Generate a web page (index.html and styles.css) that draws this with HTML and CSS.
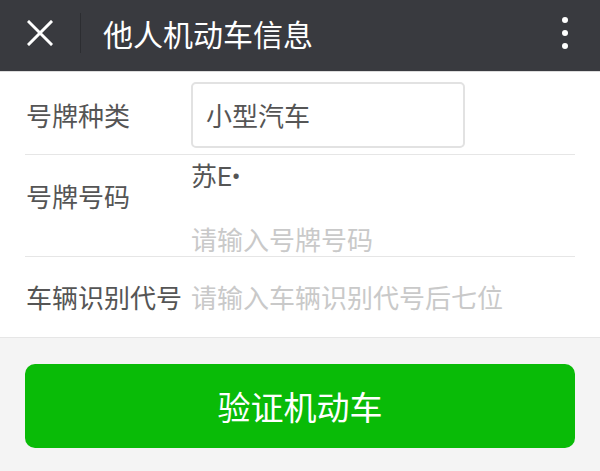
FILE: index.html
```html
<!DOCTYPE html>
<html lang="zh-CN">
<head>
<meta charset="utf-8">
<title>他人机动车信息</title>
<link rel="stylesheet" href="styles.css">
</head>
<body>
<header class="topbar">
  <button class="icon-btn close" aria-label="关闭">
    <svg width="26" height="26" viewBox="0 0 26 26"><path d="M2 2 L24 24 M24 2 L2 24" stroke="#fff" stroke-width="3" stroke-linecap="square" fill="none"/></svg>
  </button>
  <span class="divider"></span>
  <h1 class="title">他人机动车信息</h1>
  <button class="icon-btn more" aria-label="更多">
    <span class="dot"></span><span class="dot"></span><span class="dot"></span>
  </button>
</header>
<main class="page">
  <section class="form">
    <div class="row row-type">
      <div class="label">号牌种类</div>
      <div class="select">小型汽车</div>
    </div>
    <div class="row row-plate">
      <div class="label label-top">号牌号码</div>
      <div class="field-col">
        <div class="value">苏<span class="latin">E•</span></div>
        <div class="placeholder plate-input">请输入号牌号码</div>
      </div>
    </div>
    <div class="row row-vin">
      <div class="label">车辆识别代号</div>
      <div class="placeholder">请输入车辆识别代号后七位</div>
    </div>
  </section>
  <div class="actions">
    <button class="primary">验证机动车</button>
  </div>
</main>
</body>
</html>
```
FILE: styles.css
```css
* { box-sizing: border-box; }
html, body { margin: 0; padding: 0; }
body {
  width: 600px;
  height: 471px;
  overflow: hidden;
  background: #f4f4f4;
  font-family: "Noto Sans CJK SC", "Noto Sans", Roboto, sans-serif;
}
.topbar {
  height: 72px;
  background: #393a3f;
  border-bottom: 1px solid #dcdcdc;
  display: flex;
  align-items: center;
  padding-left: 27px;
  padding-right: 32px;
}
.icon-btn {
  background: none;
  border: 0;
  padding: 0;
  margin: 0;
  display: flex;
  cursor: pointer;
}
.close { width: 26px; height: 26px; margin-top: -6px; }
.divider {
  width: 1px;
  height: 40px;
  background: #2c2d31;
  margin-left: 27px;
  margin-top: -6px;
}
.title {
  margin: -6px 0 0 22px;
  flex: 1;
  font-size: 30px;
  font-weight: normal;
  color: #fff;
  line-height: 36px;
}
.more {
  flex-direction: column;
  gap: 7px;
  margin-top: -6px;
}
.dot {
  width: 6px;
  height: 6px;
  border-radius: 50%;
  background: #fff;
}
.form {
  background: #fff;
  border-bottom: 1px solid #e6e6e6;
}
.row {
  margin: 0 25px;
  display: flex;
  align-items: center;
  border-bottom: 1px solid #e6e6e6;
  font-size: 26px;
  line-height: 30px;
}
.row:last-child { border-bottom: 0; }
.label {
  width: 166px;
  flex: none;
  padding-left: 1px;
  color: #555;
  white-space: nowrap;
}
.row-type { height: 83px; padding-top: 4px; }
.select {
  width: 274px;
  height: 66px;
  border: 2px solid #e2e2e2;
  border-radius: 5px;
  color: #555;
  padding-left: 13px;
  display: flex;
  align-items: center;
}
.row-plate {
  height: 102px;
  align-items: flex-start;
  padding-top: 5px;
}
.label-top { margin-top: 21px; }
.field-col { display: flex; flex-direction: column; }
.value { color: #555; }
.latin { font-family: Roboto, "Noto Sans", sans-serif; }
.plate-input { margin-top: 32px; }
.placeholder { color: #c9c9c9; white-space: nowrap; }
.row-vin { height: 80px; }
.actions { padding: 26px 25px 0; }
.primary {
  display: block;
  width: 100%;
  height: 84px;
  border: 0;
  border-radius: 10px;
  background: #09bb07;
  color: #fff;
  font-family: inherit;
  font-size: 33px;
  line-height: 40px;
  padding: 0;
}
```
